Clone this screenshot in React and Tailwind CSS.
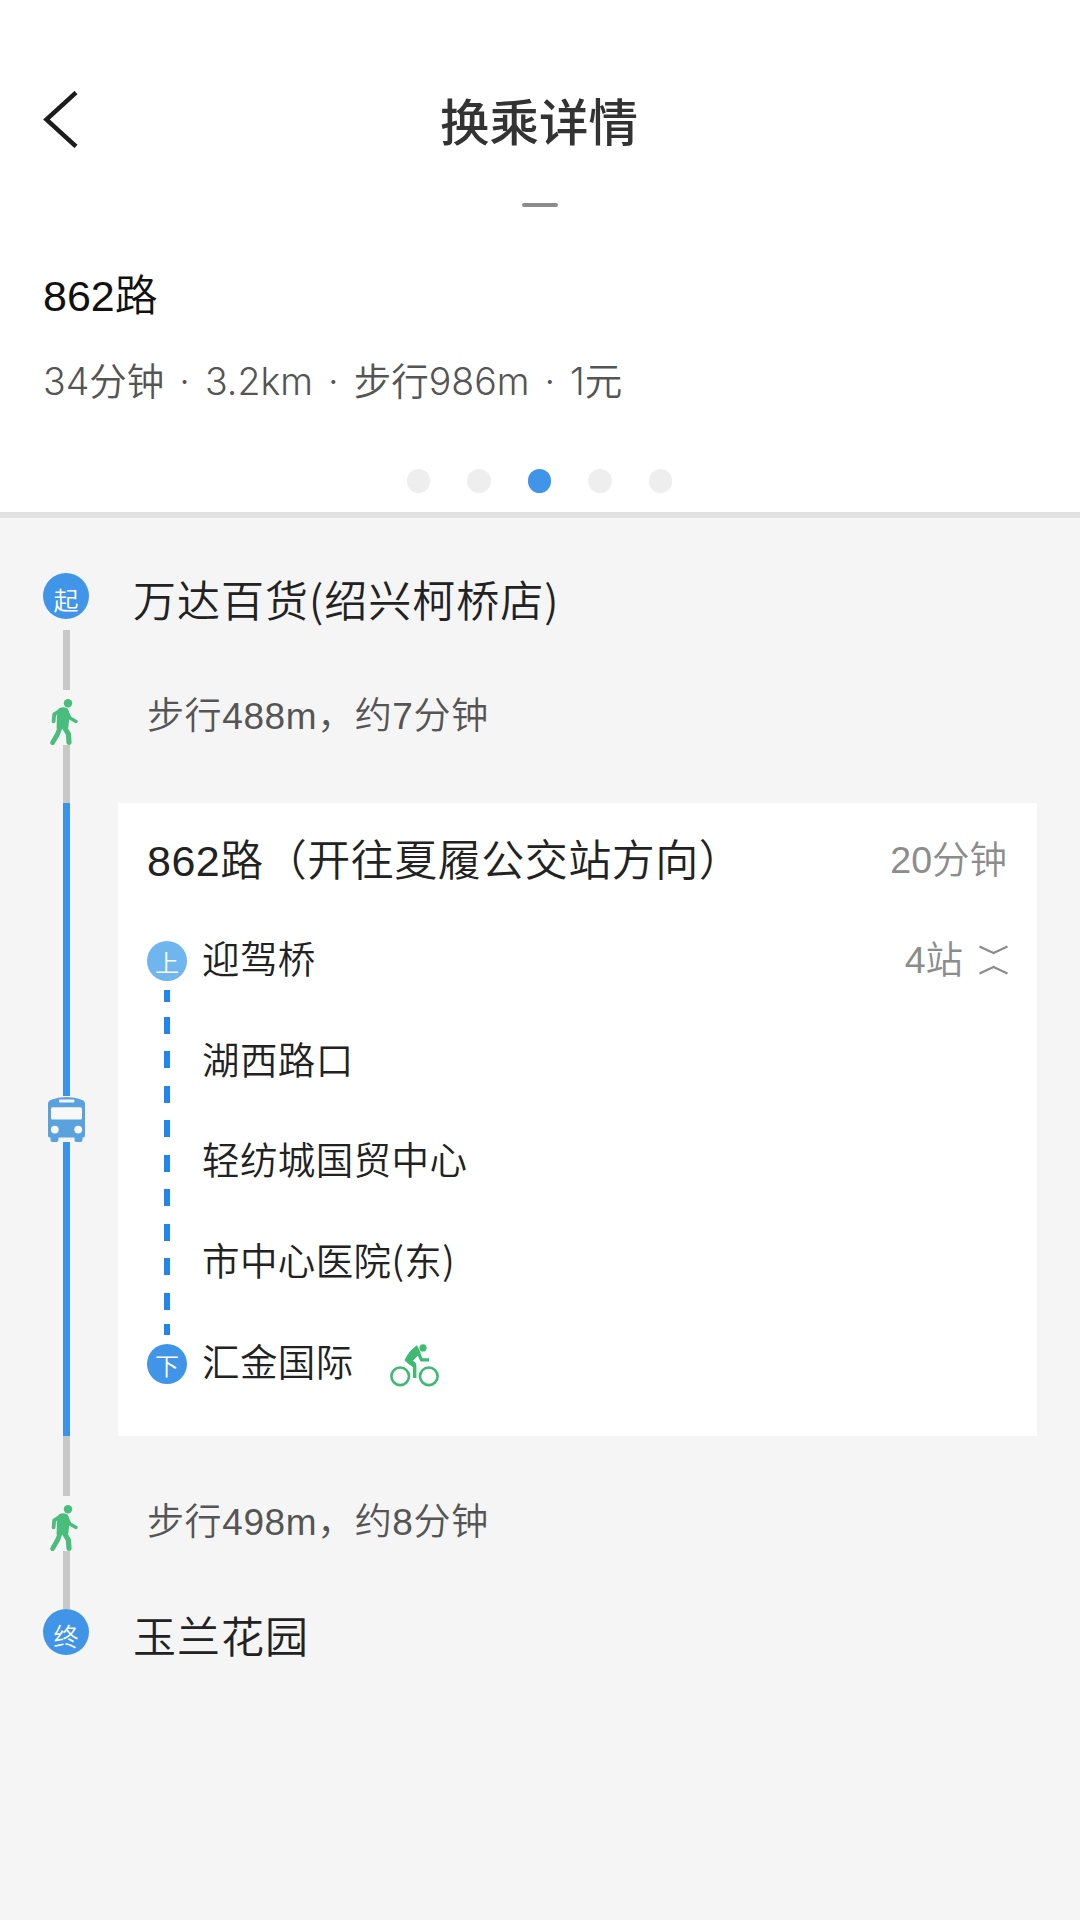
const stops = [
  { name: '迎驾桥', type: 'on' },
  { name: '湖西路口' },
  { name: '轻纺城国贸中心' },
  { name: '市中心医院(东)' },
  { name: '汇金国际', type: 'off' },
];

function WalkIcon() {
  return (
    <svg className="block w-[28px] h-[46px]" viewBox="0 0 28 46" fill="none" stroke="#49bd7c" strokeLinecap="round" strokeLinejoin="round">
      <circle cx="18" cy="4.2" r="4.2" fill="#49bd7c" stroke="none" />
      <path d="M9.5 10.6 Q13 8.5 16.5 10.3 Q18.5 12 18.2 18 L17.2 28 L7.8 29 L8.2 17 Z" fill="#49bd7c" strokeWidth="2.4" />
      <path d="M10.5 11.4 L4.2 15.4 L3.6 22.4" strokeWidth="3.8" />
      <path d="M16.5 12.5 L20 19 L26 22.4" strokeWidth="3.4" />
      <path d="M10.4 27.5 L7.8 34.5 L2.6 43.6" strokeWidth="4.8" />
      <path d="M13.6 27 L18.4 35 L19 43.4" strokeWidth="5.2" />
    </svg>
  );
}

function BusIcon() {
  return (
    <svg className="block w-[37px] h-[46px]" viewBox="0 0 37 46">
      <path
        d="M0 7 Q0.5 5 2.5 4 Q10 1 18.5 1 Q27 1 34.5 4 Q36.5 5 37 7 V40 Q37 41.5 34.5 41.5 V44 Q34.5 46 32.5 46 H28.5 Q26.5 46 26.5 44 V41.5 H10.5 V44 Q10.5 46 8.5 46 H4.5 Q2.5 46 2.5 44 V41.5 Q0 41.5 0 40 Z"
        fill="#5aa2de"
      />
      <rect x="11" y="3.4" width="15.4" height="3.2" rx="1" fill="#f5f5f5" />
      <rect x="3" y="11.2" width="31" height="12.2" rx="1.5" fill="#f8f8f8" />
      <circle cx="6.8" cy="33.6" r="3.9" fill="#f8f8f8" />
      <circle cx="30.2" cy="33.6" r="3.9" fill="#f8f8f8" />
    </svg>
  );
}

function BikeIcon() {
  return (
    <svg className="block w-[49px] h-[43px]" viewBox="0 0 49 43" fill="none" stroke="#3dbb72" strokeLinejoin="round">
      <circle cx="10.2" cy="32.3" r="8.8" strokeWidth="2.6" />
      <circle cx="38.8" cy="32.3" r="8.8" strokeWidth="2.6" />
      <circle cx="33" cy="3.9" r="3.6" fill="#3dbb72" stroke="none" />
      <path d="M26.8 1.8 L30 8.8 L22.5 16.5 L25.8 19.5 L25 24 L15 16.5 Q16 13 21 6.8 Z" fill="#3dbb72" strokeWidth="1" />
      <path d="M26.5 4 L31.4 15.8 H39" strokeWidth="3.2" />
      <path d="M19 18 L24.7 22 V34" strokeWidth="3.4" />
    </svg>
  );
}

function Header() {
  return (
    <header className="h-[512px] flex flex-col">
      <div className="h-[203px] pt-[91px] px-[43px] grid grid-cols-[35px_1fr_35px] items-start">
        <svg className="block w-[35px] h-[57px]" viewBox="0 0 35 57" fill="none" stroke="#1c1c1c" strokeWidth="4.4">
          <path d="M33 1.5 L3.4 28.5 L33 55.5" />
        </svg>
        <h1 className="pt-[4px] pr-[2px] text-center text-[49.5px] leading-[58px] font-medium text-[#333]">换乘详情</h1>
      </div>
      <div className="w-[36px] h-1 rounded-full bg-[#8c8c8c] mx-auto" />
      <div className="px-[43px] pt-[59px]">
        <h2 className="text-[43px] leading-[60px] text-[#111]">862路</h2>
        <p className="mt-[26px] text-[37.5px] leading-[60px] [word-spacing:4.5px] text-[#555] font-['Inter','Noto_Sans_CJK_SC',sans-serif]">
          34分钟 · 3.2km · 步行986m · 1元
        </p>
      </div>
      <div className="mt-[57px] flex justify-center gap-[37px] pr-px">
        {[0, 1, 2, 3, 4].map((i) => (
          <span key={i} className={`w-[23.5px] h-[23.5px] rounded-full ${i === 2 ? 'bg-[#4095e9]' : 'bg-[#eee]'}`} />
        ))}
      </div>
    </header>
  );
}

function Terminal({ label }) {
  return (
    <span className="w-[46px] h-[46px] ml-[43px] rounded-full bg-[#4095e9] text-white text-[25px] leading-[56px] text-center">
      {label}
    </span>
  );
}

function PlaceName({ children }) {
  return (
    <h3 className="ml-[44px] -mt-[5px] text-[43px] tracking-[1px] leading-[60px] text-[#222] font-['Noto_Sans_CJK_SC',sans-serif]">
      {children}
    </h3>
  );
}

function WalkStep({ text }) {
  return (
    <div className="flex h-[173px]">
      <div className="w-[147px] flex flex-col">
        <div className="w-[7px] h-[60px] ml-[63px] bg-[#c8c8c8]" />
        <div className="ml-[50px] mt-[8.5px]">
          <WalkIcon />
        </div>
        <div className="w-[7px] flex-1 ml-[63px] bg-[#c8c8c8]" />
      </div>
      <p className="pt-[57px] text-[37px] tracking-[0.6px] leading-[60px] text-[#555]">{text}</p>
    </div>
  );
}

function StopBadge({ type }) {
  return (
    <span
      className={`shrink-0 w-[40px] h-[40px] rounded-full text-white text-[24px] leading-[45px] text-center ${
        type === 'on' ? 'bg-[#6fb5ee]' : 'bg-[#4095e9]'
      }`}
    >
      {type === 'on' ? '上' : '下'}
    </span>
  );
}

function RideCard() {
  return (
    <div className="w-[919px] h-[633px] bg-white pl-[29px] pr-[30px] pt-[27px]">
      <div className="flex justify-between items-center h-[60px]">
        <h3 className="pt-px text-[43px] tracking-[0.5px] leading-[60px] text-[#222]">862路（开往夏履公交站方向）</h3>
        <span className="text-[37.5px] leading-[60px] text-[#8c8c8c]">20分钟</span>
      </div>
      <div className="flex mt-[51px]">
        <div className="w-[40px] flex flex-col items-center">
          <StopBadge type="on" />
          <div className="w-[6px] h-[345px] my-[9px] flex flex-col justify-between">
            <span className="h-[12px] bg-[#2086ee]" />
            <div className="h-[293px] flex flex-col justify-between">
              {Array.from({ length: 9 }, (_, i) => (
                <span key={i} className="h-[17px] bg-[#2086ee]" />
              ))}
            </div>
            <span className="h-[11px] bg-[#2086ee]" />
          </div>
          <StopBadge type="off" />
        </div>
        <ul className="ml-[15px] -mt-[14px] flex-1 font-['Noto_Sans_CJK_SC',sans-serif]">
          {stops.map((stop) => (
            <li key={stop.name} className="h-[100.7px] flex items-start">
              <span className="text-[37.5px] tracking-[0.4px] leading-[60px] text-[#222]">{stop.name}</span>
              {stop.type === 'off' && (
                <span className="ml-[36px] mt-[14px]">
                  <BikeIcon />
                </span>
              )}
            </li>
          ))}
        </ul>
        <div className="-mt-[11px] h-[60px] flex items-center gap-[16px] text-[37.5px] leading-[60px] text-[#8c8c8c]">
          4站
          <svg className="block w-[29px] h-[30px] -mr-[1px]" viewBox="0 0 29 30" fill="none" stroke="#8c8c8c" strokeWidth="2.2">
            <path d="M0.5 1.5 L14.5 8 L28.5 1.5" />
            <path d="M0.5 28.5 L14.5 22 L28.5 28.5" />
          </svg>
        </div>
      </div>
    </div>
  );
}

export default function App() {
  return (
    <div
      lang="zh-CN"
      className="w-[1080px] h-[1920px] bg-white overflow-hidden font-[350] font-['Liberation_Sans','Noto_Sans_CJK_SC',sans-serif]"
    >
      <Header />
      <main className="h-[1408px] bg-[#f5f5f5] border-t-[6px] border-[#e1e1e1]">
        <div className="flex h-[112px] pt-[55px]">
          <Terminal label="起" />
          <PlaceName>万达百货(绍兴柯桥店)</PlaceName>
        </div>
        <WalkStep text="步行488m，约7分钟" />
        <div className="flex h-[633px]">
          <div className="w-[118px] flex flex-col">
            <div className="w-[7px] h-[293px] ml-[63px] bg-[#3a92e9]" />
            <div className="ml-[47.5px]">
              <BusIcon />
            </div>
            <div className="w-[7px] flex-1 ml-[63px] bg-[#3a92e9]" />
          </div>
          <RideCard />
        </div>
        <WalkStep text="步行498m，约8分钟" />
        <div className="flex">
          <Terminal label="终" />
          <PlaceName>玉兰花园</PlaceName>
        </div>
      </main>
    </div>
  );
}
